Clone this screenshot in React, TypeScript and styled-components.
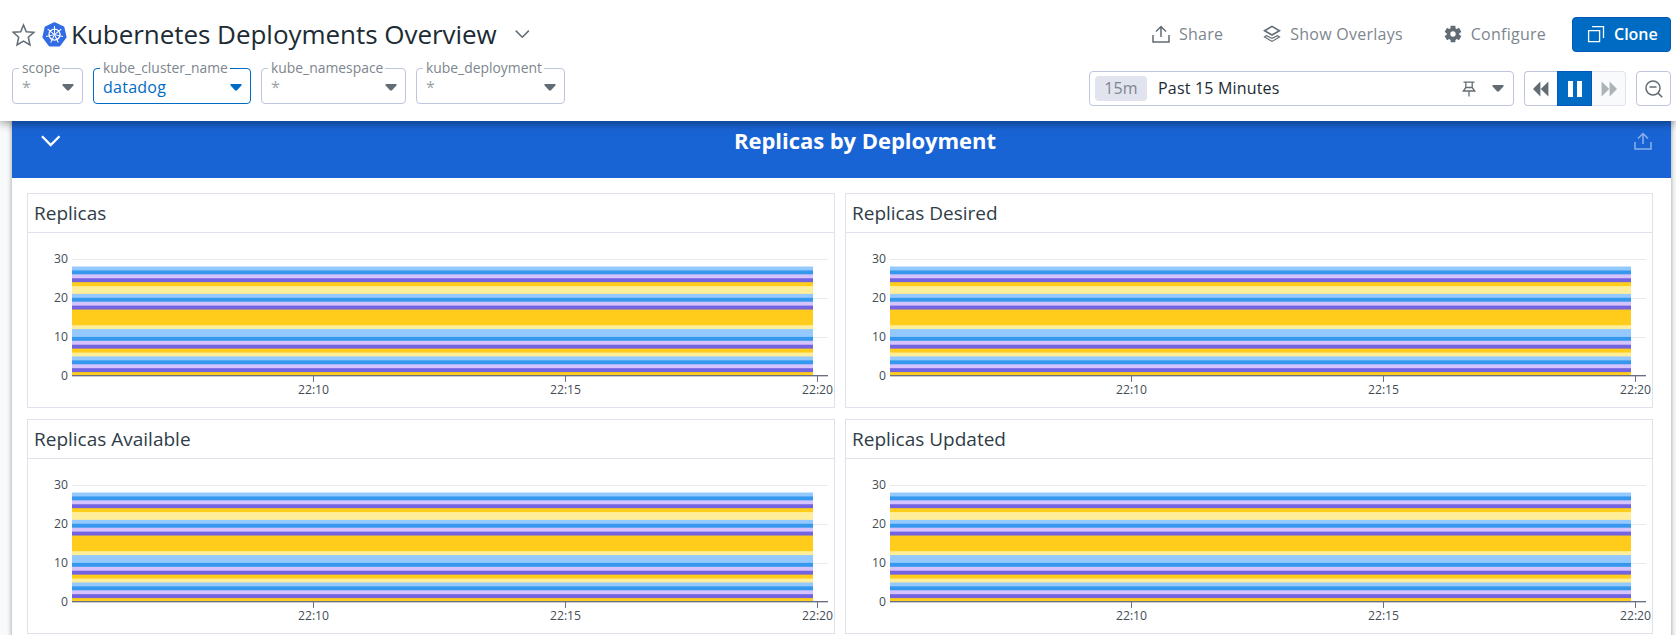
import React from 'react';
import styled, { createGlobalStyle } from 'styled-components';

const GlobalStyle = createGlobalStyle`
  *, *::before, *::after { box-sizing: border-box; }
  html, body { margin: 0; height: 100%; overflow: hidden; }
  body { font-family: "Open Sans", "Noto Sans", sans-serif; background: #f9fafc; color: #1c2b34; }
  button { font: inherit; color: inherit; background: none; border: 0; padding: 0; margin: 0; }
  svg { display: block; flex: none; }
`;

const Page = styled.div`
  width: 1676px;
  height: 635px;
  overflow: hidden;
  display: flex;
  flex-direction: column;
`;

const Header = styled.header`
  position: relative;
  z-index: 1;
  flex: none;
  height: 121px;
  background: #fff;
  box-shadow: 0 1px 10px rgba(0, 0, 0, 0.5);
  padding: 17px 5px 0 12px;
`;

const TitleRow = styled.div`
  display: flex;
  align-items: center;
  height: 35px;
`;

const Title = styled.h1`
  margin: 0 18px 0 4px;
  font-size: 26px;
  line-height: 35px;
  font-weight: 400;
  letter-spacing: -0.04px;
  white-space: nowrap;
`;

const HelmSlot = styled.span`
  margin-left: 6px;
`;

const Actions = styled.div`
  margin-left: auto;
  display: flex;
  align-items: center;
`;

const Action = styled.button<{ $after: number }>`
  display: flex;
  align-items: center;
  gap: 9px;
  margin-right: ${p => p.$after}px;
  font-size: 16px;
  line-height: 22px;
  padding-bottom: 1px;
  letter-spacing: 0.25px;
  color: #7d868e;
  white-space: nowrap;
`;

const CloneButton = styled.button`
  display: flex;
  align-items: center;
  gap: 9px;
  width: 99px;
  height: 35px;
  padding: 0 0 1px 14px;
  border: 1px solid #0058b8;
  border-radius: 4px;
  background: #006bc2;
  color: #fff;
  font-size: 16px;
  font-weight: 600;
`;

const ControlRow = styled.div`
  display: flex;
  justify-content: space-between;
  padding-top: 8px;
`;

const Variables = styled.div`
  display: flex;
  gap: 10px;
`;

const Variable = styled.fieldset<{ $width: number; $active?: boolean }>`
  display: flex;
  width: ${p => p.$width}px;
  min-width: 0;
  height: 44px;
  margin: 0;
  padding: 1px 8px 0 9px;
  border: 1px solid ${p => (p.$active ? '#006bc2' : '#c0c5de')};
  border-radius: 4px;
  color: ${p => (p.$active ? '#006bc2' : '#9aa1a6')};
`;

const VariableName = styled.legend`
  margin-left: -3px;
  padding: 0 2px 0 3px;
  font-size: 13.9px;
  line-height: 15px;
  padding-bottom: 1px;
  color: #7d868e;
  white-space: nowrap;
`;

const VariableValue = styled.div`
  display: flex;
  align-items: center;
  justify-content: space-between;
  width: 100%;
  height: 20px;
  font-size: 16px;
  line-height: 20px;
  letter-spacing: 0.25px;
`;

const TimeControls = styled.div`
  display: flex;
  gap: 10px;
  padding-top: 11px;
`;

const RangePicker = styled.div`
  display: flex;
  align-items: center;
  width: 425px;
  height: 35px;
  padding: 0 9px 0 5px;
  border: 1px solid #c0c5de;
  border-radius: 4px;
  font-size: 16px;
  letter-spacing: 0.18px;
`;

const RangeBadge = styled.span`
  width: 52px;
  height: 25px;
  margin-right: 11px;
  border-radius: 4px;
  background: #e1e4ee;
  color: #7d868e;
  line-height: 24px;
  text-align: center;
`;

const RangeLabel = styled.span`
  flex: 1;
  line-height: 22px;
  padding-bottom: 1px;
`;

const PinSlot = styled.span`
  margin-right: 16px;
`;

const Playback = styled.div`
  display: flex;
`;

const PlayButton = styled.button<{ $kind: 'start' | 'on' | 'end' }>`
  display: flex;
  align-items: center;
  justify-content: center;
  width: ${p => (p.$kind === 'start' ? 33 : p.$kind === 'on' ? 35 : 34)}px;
  height: 35px;
  border: 1px solid ${p => ({ start: '#c0c5de', on: '#0058b8', end: '#e1e4ee' })[p.$kind]};
  border-left-width: ${p => (p.$kind === 'end' ? 0 : 1)}px;
  border-right-width: ${p => (p.$kind === 'start' ? 0 : 1)}px;
  border-radius: ${p => ({ start: '4px 0 0 4px', on: '0', end: '0 4px 4px 0' })[p.$kind]};
  background: ${p => ({ start: '#fff', on: '#006bc2', end: '#f9fafc' })[p.$kind]};
`;

const ZoomButton = styled.button`
  display: flex;
  align-items: center;
  justify-content: center;
  width: 35px;
  height: 35px;
  padding-left: 1px;
  border: 1px solid #c0c5de;
  border-radius: 4px;
`;

const Board = styled.main`
  flex: 1;
  width: 1659px;
  margin-left: 12px;
  background: #fff;
  box-shadow: 0 0 5px rgba(0, 0, 0, 0.4);
`;

const GroupHeader = styled.div`
  display: flex;
  align-items: center;
  height: 57px;
  padding: 0 19px 17px 29px;
  background: #1964d5;
  color: #fff;
`;

const GroupTitle = styled.h2`
  flex: 1;
  margin: 0;
  padding: 0 0 2px 35px;
  font-size: 22px;
  line-height: 28px;
  font-weight: 700;
  letter-spacing: -0.05px;
  text-align: center;
`;

const Grid = styled.div`
  display: grid;
  grid-template-columns: 808px 808px;
  grid-auto-rows: 215px;
  gap: 11px 10px;
  padding: 15px;
`;

const Card = styled.section`
  border: 1px solid #e1e1eb;
`;

const CardTitle = styled.h3`
  margin: 0;
  height: 39px;
  padding-left: 6px;
  border-bottom: 1px solid #e1e1eb;
  font-size: 19px;
  line-height: 38px;
  font-weight: 400;
  color: #2f3d47;
`;

const AxisText = styled.text`
  font-size: 12.2px;
  fill: #434c55;
`;

const Caret = ({ color }: { color: string }) => (
  <svg width="12" height="7" viewBox="0 0 12 7">
    <path d="M1.200 0h9.600c.900 0 1.200.900.600 1.500L7 6.300c-.600.600-1.400.600-2 0L.600 1.500C0 .900.300 0 1.200 0z" fill={color} />
  </svg>
);

const StarIcon = () => (
  <svg width="24" height="24" viewBox="0 0 24 24" fill="none" stroke="#626c74" strokeWidth="1.500">
    <path d="M11.500 2l2.800 6.800 7.600.500-5.600 4.900 1.700 7.800-6.500-3.900L5 22l1.700-7.800L1.100 9.300l7.600-.500z" />
  </svg>
);

const spokes = [0, 1, 2, 3, 4, 5, 6].map(i => (i * 360) / 7);

const HelmIcon = () => (
  <svg width="25" height="25" viewBox="0 0 25 25">
    <path
      d="M12.500 1.200L21.400 5.500 23.600 15.100 17.400 23.400H7.600L1.400 15.100 3.600 5.500z"
      fill="#326ce5"
      stroke="#326ce5"
      strokeWidth="2"
      strokeLinejoin="round"
    />
    <g transform="translate(12.500 12.600)" stroke="#fff" fill="none">
      <circle r="5.500" strokeWidth="1.300" />
      {spokes.map(a => (
        <path key={a} d="M0 -1.200V-8.700" strokeWidth="1" transform={`rotate(${a})`} />
      ))}
      <circle r="1.300" fill="#fff" stroke="none" />
    </g>
  </svg>
);

const Chevron = ({ w, color, sw }: { w: number; color: string; sw: number }) => (
  <svg width={w} height={w * 0.7} viewBox="0 0 20 14" fill="none" stroke={color} strokeWidth={sw}>
    <path d="M1 2.200L9.700 11 18.500 2.200" />
  </svg>
);

const ShareIcon = ({ color }: { color: string }) => (
  <svg width="18" height="18" viewBox="0 0 18 18" fill="none" stroke={color} strokeWidth="1.500">
    <path d="M1 10v7.100h16V10M9 12V1.500M4 6.500L9 1.500l5 5" />
  </svg>
);

const LayersIcon = () => (
  <svg width="18" height="18" viewBox="0 0 18 18" fill="none" stroke="#626c74" strokeWidth="1.600">
    <path d="M1.500 5.700L9 1.400l7.500 4.300L9 10z" />
    <path d="M3.500 10.600l-2 1.300L9 16.400l7.500-4.500-2-1.300L9 13.300z" strokeWidth="1.200" />
  </svg>
);

const teeth = [0, 60, 120];

const GearIcon = () => (
  <svg width="18" height="18" viewBox="-9 -9 18 18" fill="#626c74">
    {teeth.map(a => (
      <rect key={a} x="-2.400" y="-8.300" width="4.800" height="16.600" rx=".5" transform={`rotate(${a})`} />
    ))}
    <circle r="6.300" />
    <circle r="2.700" fill="#fff" />
  </svg>
);

const CloneIcon = () => (
  <svg width="18" height="18" viewBox="0 0 18 18" fill="none" stroke="#fff" strokeWidth="1.300">
    <path d="M1.600 5.600h11v11h-11zM5 1.600h11.500V13" />
  </svg>
);

const PinIcon = () => (
  <svg width="14" height="16" viewBox="0 0 14 16" fill="none" stroke="#626c74" strokeWidth="1.300">
    <path d="M1.500 1.200h11M3.800 1.500v5.300M10.200 1.500v5.300M3.800 6.500L1.300 10h11.400l-2.500-3.500zM7 10v5.500" />
  </svg>
);

const SeekIcon = ({ color, flip }: { color: string; flip?: boolean }) => (
  <svg width="16" height="16" viewBox="0 0 16 16" fill={color}>
    <path
      d="M7.400 .500v15L0 8zM15.400 .500v15L7.800 8z"
      transform={flip ? 'matrix(-1 0 0 1 16 0)' : undefined}
    />
  </svg>
);

const PauseIcon = () => (
  <svg width="14" height="16" viewBox="0 0 14 16" fill="#fff">
    <path d="M0 0h5v16H0zM9 0h5v16H9z" />
  </svg>
);

const ZoomOutIcon = () => (
  <svg width="18" height="18" viewBox="0 0 18 18" fill="none" stroke="#626c74" strokeWidth="1.500">
    <circle cx="8" cy="8" r="7" />
    <path d="M4.500 7h7M12.900 12.900l4.300 4.300" />
  </svg>
);

const palette = {
  gold: '#ffcc1c',
  violet: '#7463e1',
  lilac: '#d6c3fd',
  blue: '#3598ec',
  sky: '#93c9ff',
  cream: '#ffee99',
};

type Series = [keyof typeof palette, number];

const series: Series[] = [
  ['gold', 1], ['violet', 1], ['lilac', 1], ['blue', 1], ['sky', 1],
  ['cream', 1], ['gold', 1], ['violet', 1], ['lilac', 1], ['blue', 1],
  ['sky', 2], ['cream', 1], ['gold', 4], ['violet', 1], ['lilac', 1],
  ['blue', 1], ['sky', 1], ['cream', 2], ['gold', 1], ['violet', 1],
  ['lilac', 1], ['blue', 1], ['sky', 1],
];

const UNIT = 3.91;
const BASE = 143;

// Tallest first: each area reaches the baseline and the next one covers its lower part.
const areas = series
  .map(([name], i) => ({
    color: palette[name],
    height: series.slice(0, i + 1).reduce((sum, s) => sum + s[1], 0) * UNIT,
  }))
  .reverse();

const timeTicks = [
  { x: 285.5, label: '22:10' },
  { x: 537.5, label: '22:15' },
  { x: 789.5, label: '22:20' },
];

const StackedChart = () => (
  <svg width="806" height="174" viewBox="0 0 806 174">
    {[30, 20, 10].map(v => (
      <path key={v} d={`M44 ${Math.round(BASE - v * UNIT) + 0.5}H800`} stroke="#e9e9ec" />
    ))}
    {areas.map((a, i) => (
      <rect key={i} x="44" y={BASE - a.height} width="741" height={a.height} fill={a.color} />
    ))}
    <path d="M44 142.500H800" stroke="#6b6f86" />
    <path d="M44 143.500H800" stroke="#c9cbd4" />
    {[0, 10, 20, 30].map(v => (
      <AxisText key={v} x="40" y={146.500 - v * 3.890} textAnchor="end">{v}</AxisText>
    ))}
    {timeTicks.map(t => (
      <g key={t.label}>
        <path d={`M${t.x} 143v6`} stroke="#6b6f86" />
        <AxisText x={t.x} y="161" textAnchor="middle">{t.label}</AxisText>
      </g>
    ))}
  </svg>
);

const variables = [
  { name: 'scope', value: '*', width: 71 },
  { name: 'kube_cluster_name', value: 'datadog', width: 158, active: true },
  { name: 'kube_namespace', value: '*', width: 145 },
  { name: 'kube_deployment', value: '*', width: 149 },
];

const cards = ['Replicas', 'Replicas Desired', 'Replicas Available', 'Replicas Updated'];

export default function App() {
  return (
    <Page>
      <GlobalStyle />
      <Header>
        <TitleRow>
          <StarIcon />
          <HelmSlot><HelmIcon /></HelmSlot>
          <Title>Kubernetes Deployments Overview</Title>
          <Chevron w={15} color="#626c74" sw={2} />
          <Actions>
            <Action $after={40}><ShareIcon color="#626c74" />Share</Action>
            <Action $after={41}><LayersIcon />Show Overlays</Action>
            <Action $after={26}><GearIcon />Configure</Action>
            <CloneButton><CloneIcon />Clone</CloneButton>
          </Actions>
        </TitleRow>
        <ControlRow>
          <Variables>
            {variables.map(v => (
              <Variable key={v.name} $width={v.width} $active={v.active}>
                <VariableName>{v.name}</VariableName>
                <VariableValue>
                  {v.value}
                  <Caret color={v.active ? '#006bc2' : '#626c74'} />
                </VariableValue>
              </Variable>
            ))}
          </Variables>
          <TimeControls>
            <RangePicker>
              <RangeBadge>15m</RangeBadge>
              <RangeLabel>Past 15 Minutes</RangeLabel>
              <PinSlot><PinIcon /></PinSlot>
              <Caret color="#626c74" />
            </RangePicker>
            <Playback>
              <PlayButton $kind="start"><SeekIcon color="#626c74" /></PlayButton>
              <PlayButton $kind="on"><PauseIcon /></PlayButton>
              <PlayButton $kind="end"><SeekIcon color="#adb2b7" flip /></PlayButton>
            </Playback>
            <ZoomButton><ZoomOutIcon /></ZoomButton>
          </TimeControls>
        </ControlRow>
      </Header>
      <Board>
        <GroupHeader>
          <Chevron w={20} color="#fff" sw={2.300} />
          <GroupTitle>Replicas by Deployment</GroupTitle>
          <ShareIcon color="#8cb1ea" />
        </GroupHeader>
        <Grid>
          {cards.map(name => (
            <Card key={name}>
              <CardTitle>{name}</CardTitle>
              <StackedChart />
            </Card>
          ))}
        </Grid>
      </Board>
    </Page>
  );
}
